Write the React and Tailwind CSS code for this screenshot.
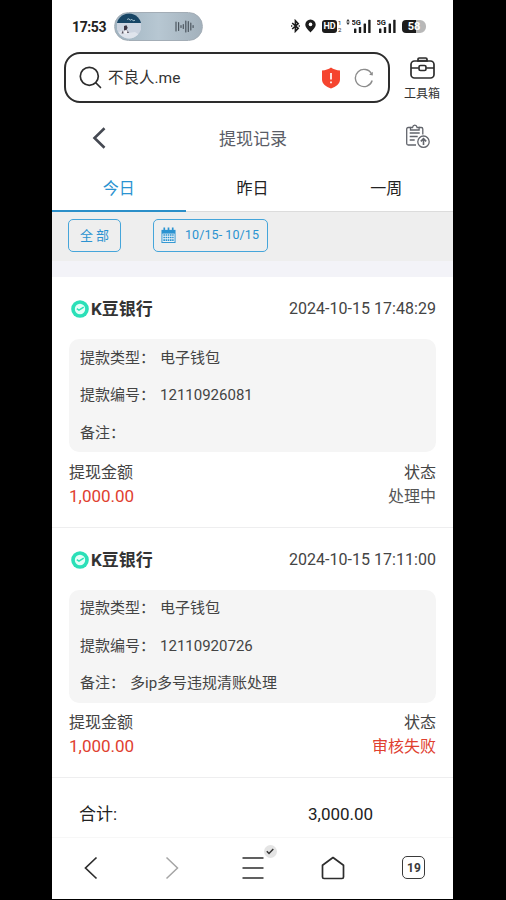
import React, { useState } from "react";

const records = [
  {
    id: "12110926081",
    time: "2024-10-15 17:48:29",
    type: "电子钱包",
    remark: "",
    amount: "1,000.00",
    status: "处理中",
    failed: false,
  },
  {
    id: "12110920726",
    time: "2024-10-15 17:11:00",
    type: "电子钱包",
    remark: "多ip多号违规清账处理",
    amount: "1,000.00",
    status: "审核失败",
    failed: true,
  },
];

const tabs = ["今日", "昨日", "一周"];

const Signal = () => (
  <svg width="19" height="15" viewBox="0 0 19 15" fill="#1c1c1c">
    <text x="-0.5" y="6.2" fontSize="7.5" fontWeight="700" fontFamily="Roboto">
      5G
    </text>
    <rect x="2" y="9.5" width="2.4" height="4.5" rx="0.6" />
    <rect x="6.8" y="8" width="2.4" height="6" rx="0.6" />
    <rect x="11.6" y="4.5" width="2.4" height="9.5" rx="0.6" />
    <rect x="16.2" y="0.8" width="2.4" height="13.2" rx="0.6" />
  </svg>
);

const StatusBar = () => (
  <div className="flex h-[52px] items-center pl-5 pr-[27px]">
    <span className="w-[42px] pt-px text-[14px] font-bold leading-4 tracking-[-0.4px] text-[#222]">17:53</span>
    <div className="flex h-[29px] w-[89px] items-center justify-between rounded-full border border-[#a3adb6] bg-linear-to-r from-[#a0b4c1] via-[#b7c7d2] to-[#a3b1bc] pl-[2px] pr-2">
      <svg width="24" height="26" viewBox="0 0 24 26">
        <clipPath id="cover">
          <circle cx="12" cy="13" r="12.5" />
        </clipPath>
        <g clipPath="url(#cover)">
          <rect width="24" height="26" fill="#ccd4e0" />
          <rect width="24" height="10" fill="#174565" />
          <path d="M10 6.5l2-.8 1 1.6 2-1 1 1.5 2-.5" stroke="#9bb9c8" fill="none" />
          <path d="M0 20l6-3 5 3 7-1 6 4v3H0z" fill="#dfe4ec" />
          <path d="M7 13l2.5-.8 1.2 2.5-1.7 3-2-.5z" fill="#3b3442" />
          <path d="M6 17l-1.5 3.5h2zM10.5 17l1.5 3h-2z" fill="#57505c" />
          <path d="M8 17l2.5 1-1 3-2.5-1z" fill="#f5f3f5" />
        </g>
      </svg>
      <svg width="19" height="13" viewBox="0 0 19 13" stroke="#4c565f" strokeWidth="1.2" strokeLinecap="round">
        <path d="M1 2v9M3.6 2.5v8M6 5.5v2M8.3 4.5v4M10.8 1v11M13.3 1.5v10M15.8 3v7M18.1 5.5v2" />
      </svg>
    </div>
    <div className="ml-auto flex items-center">
      <svg width="9" height="14" viewBox="0 0 9 14" fill="none" stroke="#1c1c1c" strokeWidth="1.6">
        <path d="M1.2 4l6 5.4L4.4 12.3V1.7l2.8 2.9-6 5.4" />
        <path d="M0 7h1.3M7.6 7h1.3" />
      </svg>
      <svg className="ml-[5px]" width="11" height="14" viewBox="0 0 11 14">
        <path
          d="M5.5.4A5.2 5.2 0 0 0 .3 5.6C.3 9 3.5 11 5.5 13.6 7.5 11 10.7 9 10.7 5.6A5.2 5.2 0 0 0 5.5.4z"
          fill="#1c1c1c"
        />
        <circle cx="5.5" cy="5.4" r="1.8" fill="#fff" />
      </svg>
      <span className="ml-[6px] flex h-[13px] w-[15px] items-center justify-center rounded-[3px] bg-[#1c1c1c] text-[9px] font-bold leading-none text-white">
        HD
      </span>
      <span className="ml-px flex w-[4px] flex-col text-[6px] leading-[7px] text-[#222]">
        <span>1</span>
        <span>2</span>
      </span>
      <svg className="mb-2 ml-[4px]" width="4" height="6" viewBox="0 0 4 6" fill="#333">
        <path d="M2 0l1.8 2.5H.2zM2 6l1.8-2.5H.2z" />
      </svg>
      <span className="ml-[2px]">
        <Signal />
      </span>
      <span className="ml-[6px]">
        <Signal />
      </span>
      <span className="ml-[6px] flex h-[13px] w-[24px] items-center justify-center rounded-l-[4px] rounded-r-[6px] bg-linear-to-r from-[#1c1c1c] from-58% to-[#b8b8b8] to-58% text-[11px] font-bold leading-none text-white">
        58
      </span>
    </div>
  </div>
);

const SearchBar = () => (
  <div className="flex h-[51px] pl-3">
    <div className="flex w-[326px] items-center rounded-[16px] border-2 border-[#2d2d2d] pl-[13px] pr-[14px]">
      <svg width="23" height="23" viewBox="0 0 23 23" fill="none" stroke="#2d2d2d" strokeWidth="1.7" strokeLinecap="round">
        <circle cx="10.3" cy="10.3" r="9" />
        <path d="M17 17l4.5 4.5" />
      </svg>
      <span className="ml-[6px] text-[15.5px] leading-5 text-[#333]">不良人.me</span>
      <svg className="ml-auto" width="20" height="22" viewBox="0 0 20 22">
        <path
          d="M10 .5c2.5 1.8 5.5 2.7 9 3v9c0 4.5-4 7-9 9-5-2-9-4.5-9-9v-9c3.5-.3 6.5-1.2 9-3z"
          fill="#f5452f"
        />
        <path d="M10 6v6.5M10 14.6v1.6" stroke="#fff" strokeWidth="1.7" />
      </svg>
      <svg className="ml-[13px]" width="20" height="20" viewBox="0 0 20 20" fill="none" stroke="#8c8c8c" strokeWidth="1.4">
        <path d="M17.6 6A8.6 8.6 0 1 0 18.2 12.5" />
        <path d="M18.8 3.8v3.7l-3.7-.8z" fill="#8c8c8c" stroke="none" />
      </svg>
    </div>
    <div className="ml-[14px] flex flex-col items-center pt-[5px]">
      <svg width="25" height="22" viewBox="0 0 25 22" fill="none" stroke="#2d2d2d" strokeWidth="1.7">
        <path d="M8 4V2.3q0-1.3 1.3-1.3h6.4Q17 1 17 2.3V4z" fill="#ddd" />
        <rect x="1" y="4" width="23" height="17" rx="3.5" />
        <path d="M1 11h7.5M16.5 11H24" />
        <rect x="9" y="8.5" width="7" height="5" rx="1.5" />
      </svg>
      <span className="mt-[7px] text-[12px] leading-4 text-[#333]">工具箱</span>
    </div>
  </div>
);

const Header = () => (
  <div className="flex h-[69px] items-center pl-10 pr-[23px]">
    <svg width="14" height="22" viewBox="0 0 14 22" fill="none" stroke="#454952" strokeWidth="2.6">
      <path d="M12.5 1.2L2.5 11l10 9.8" />
    </svg>
    <h1 className="ml-[113px] pt-[2px] text-[17px] leading-6 text-[#5a5d66]">提现记录</h1>
    <svg width="25" height="25" viewBox="0 0 25 25" fill="none" stroke="#62656c" strokeWidth="1.3" className="mb-[3px] ml-auto">
      <path d="M5.5 3.5H3.2Q1.7 3.5 1.7 5v14.5q0 1.5 1.5 1.5H11M14 3.5h2.3q1.5 0 1.5 1.5v5.5" />
      <path d="M5.5 6V3.5h2q.5-2.3 2.3-2.3t2.3 2.3h2V6z" />
      <path d="M4.7 9h10M4.7 12.5h8M4.7 16h5" />
      <circle cx="18.5" cy="17.7" r="5.7" />
      <path d="M18.5 21v-6.2M15.8 17.4l2.7-2.7 2.7 2.7" strokeWidth="1.6" />
    </svg>
  </div>
);

const CalendarIcon = () => (
  <svg width="15" height="17" viewBox="0 0 16 17">
    <path d="M.5 2.5h15v14H.5z" fill="#2b93d1" />
    <path d="M3.5 0v4M8 0v4M12.5 0v4" stroke="#2b93d1" strokeWidth="1.8" />
    <path d="M1.5 6.5h13v9h-13z" fill="#eef4f7" />
    <path
      d="M2.5 8h11M2.5 10.7h11M2.5 13.4h11"
      stroke="#2b93d1"
      strokeWidth="1.7"
      strokeDasharray="1.7 0.65"
    />
  </svg>
);

const BankLogo = () => (
  <svg width="18" height="18" viewBox="0 0 18 18">
    <circle cx="9" cy="9" r="8.8" fill="#2be0b8" />
    <circle cx="9" cy="9" r="5.2" fill="#e5fff8" />
    <path d="M5.8 8.6l2.2 1.5 4.7-2.9" stroke="#2be0b8" strokeWidth="1.5" fill="none" />
  </svg>
);

const Field = ({ label, value }) => (
  <div className="flex gap-[5px]">
    <span>{label}：</span>
    <span>{value}</span>
  </div>
);

const Record = ({ item }) => (
  <div className="h-[250.5px] border-b-[1.5px] border-[#eeeeef] px-[17px] pt-5">
    <div className="flex h-6 items-center pl-[2px]">
      <BankLogo />
      <span className="ml-[2px] text-[17px] font-bold leading-6 text-[#333]">K豆银行</span>
      <span className="ml-auto text-[16px] leading-6 tracking-[0.03px] text-[#444]">{item.time}</span>
    </div>
    <div className="mt-[18px] h-[113px] rounded-[10px] bg-[#f5f5f5] pl-[11px] pt-[0.5px] text-[15px] leading-[37.5px] text-[#444]">
      <Field label="提款类型" value={item.type} />
      <Field label="提款编号" value={item.id} />
      <Field label="备注" value={item.remark} />
    </div>
    <div className="mt-[8.5px] flex justify-between text-[16px] leading-6 text-[#444]">
      <div>
        <p>提现金额</p>
        <p className="-mt-px text-[17px] text-[#e0402f]">{item.amount}</p>
      </div>
      <div className="text-right">
        <p>状态</p>
        <p className={item.failed ? "text-[#e0402f]" : "text-[#555]"}>{item.status}</p>
      </div>
    </div>
  </div>
);

const BottomNav = () => (
  <div className="grid h-[62px] grid-cols-5 place-items-center border-t border-[#f7f7f7] pb-[2px] text-[#2d2d2d]">
    <svg width="14" height="24" viewBox="0 0 14 24" fill="none" stroke="currentColor" strokeWidth="1.7" className="mr-[2px]">
      <path d="M12.5 1.5L1.5 12l11 10.5" />
    </svg>
    <svg width="14" height="24" viewBox="0 0 14 24" fill="none" stroke="#a5a5a5" strokeWidth="1.5">
      <path d="M1.5 1.5l11 10.5-11 10.5" />
    </svg>
    <div className="relative ml-px">
      <svg width="22" height="24" viewBox="0 0 22 24" stroke="currentColor" strokeWidth="1.7">
        <path d="M.5 2h21M.5 12h21M.5 22h21" />
      </svg>
      <span className="absolute -top-[11px] left-[22px] flex h-[13px] w-[13px] items-center justify-center rounded-full bg-[#e4e4e4]">
        <svg width="8" height="7" viewBox="0 0 8 7" fill="none" stroke="#333" strokeWidth="1.5">
          <path d="M.8 3.3l2.2 2.2L7.3 1" />
        </svg>
      </span>
    </div>
    <svg width="24" height="24" viewBox="0 0 24 24" fill="none" stroke="currentColor" strokeWidth="1.7">
      <path d="M1.5 9.2L12 1.5l10.5 7.7V21q0 1.5-1.5 1.5H3q-1.5 0-1.5-1.5z" strokeLinejoin="round" />
    </svg>
    <span className="ml-[2px] flex h-[23px] w-[23px] items-center justify-center rounded-[5px] border-[1.5px] border-[#3a3a3a] text-[12px] font-bold leading-none text-[#3a3a3a]">
      19
    </span>
  </div>
);

const App = () => {
  const [active, setActive] = useState("今日");

  return (
    <div
      lang="zh-CN"
      className="h-[900px] w-[506px] overflow-hidden bg-black font-['Roboto','Noto_Sans_CJK_SC',sans-serif]"
    >
      <div className="ml-[52px] flex h-[899px] w-[401px] flex-col bg-white">
        <StatusBar />
        <SearchBar />
        <Header />

        <div className="flex h-10 border-b border-[#dcdcdc]">
          {tabs.map((tab) => (
            <button
              key={tab}
              onClick={() => setActive(tab)}
              className={
                tab === active
                  ? "-mb-px flex-1 border-b-2 border-[#2b8fc9] pb-[5px] text-[16px] text-[#2b93d1]"
                  : "flex-1 pb-[5px] text-[16px] text-[#222]"
              }
            >
              {tab}
            </button>
          ))}
        </div>

        <div className="flex h-[49px] bg-[#eeeeee] pl-4 pt-[7px] text-[#2b93d1]">
          <button className="h-[33px] w-[53px] rounded-[5px] border border-[#45a5da] pt-px text-[13px]">全 部</button>
          <button className="ml-8 flex h-[33px] w-[115px] items-center rounded-[5px] border border-[#45a5da] pl-[7px] text-[12.5px]">
            <CalendarIcon />
            <span className="ml-[9px] tracking-[0.08px]">10/15- 10/15</span>
          </button>
        </div>
        <div className="h-4 bg-[#f3f3f8]" />

        {records.map((item) => (
          <Record key={item.id} item={item} />
        ))}

        <div className="flex flex-1 items-center pb-[3px] pl-[27px] pt-[15px] text-[17px] leading-6 text-[#222]">
          <span className="w-[229px]">合计:</span>
          <span>3,000.00</span>
        </div>
        <BottomNav />
      </div>
    </div>
  );
};

export default App;
